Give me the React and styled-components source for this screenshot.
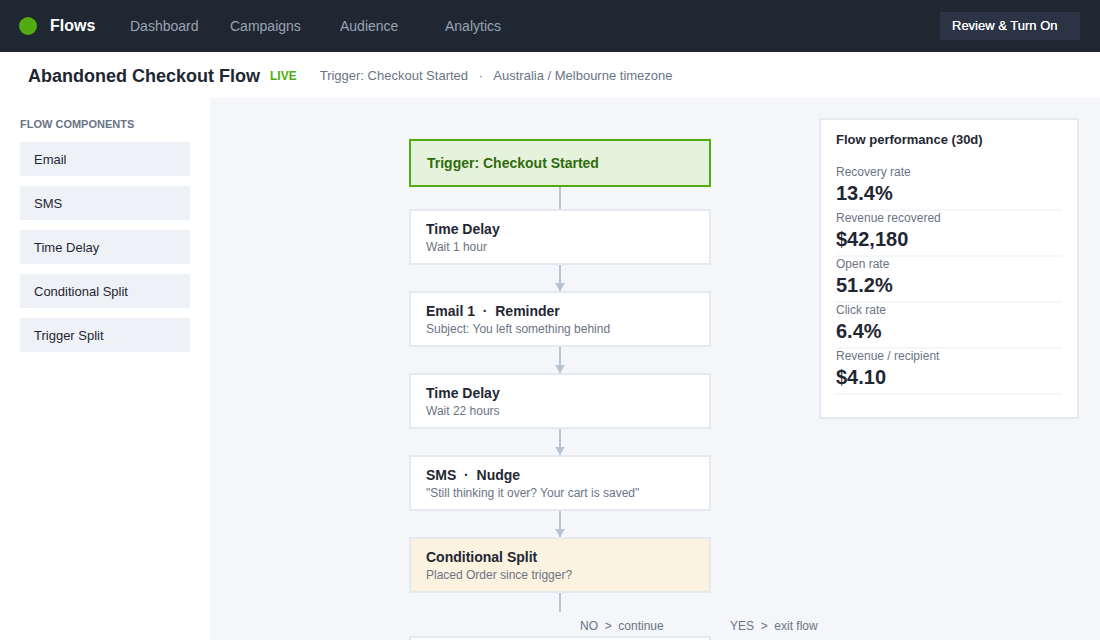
import React from 'react'
import styled, { createGlobalStyle } from 'styled-components'

const colors = {
  ink: '#1f2733',
  muted: '#6b7485',
  line: '#b8c3d3',
  border: '#e6e9f0',
  canvas: '#f4f6fa',
  green: '#52ab10',
}

const GlobalStyle = createGlobalStyle`
  html, body {
    margin: 0;
    height: 100%;
    overflow: hidden;
    background: #fff;
    font-family: "Liberation Sans", Arial, sans-serif;
    color: ${colors.ink};
  }
  * { box-sizing: border-box; }
`

const Page = styled.div`
  width: 1100px;
  height: 640px;
  display: flex;
  flex-direction: column;
  overflow: hidden;
`

const TopBar = styled.header`
  height: 52px;
  flex: none;
  display: flex;
  align-items: center;
  padding: 0 20px 0 19px;
  background: ${colors.ink};
`

const Logo = styled.span`
  width: 18px;
  height: 18px;
  border-radius: 50%;
  background: ${colors.green};
  margin-right: 13px;
`

const Brand = styled.span`
  width: 80px;
  font-size: 16px;
  font-weight: 700;
  color: #fff;
`

const Nav = styled.nav`
  display: flex;
  flex: 1;
`

const NavLink = styled.a`
  width: ${props => props.$width}px;
  font-size: 14px;
  color: #9aa3b2;
`

const TurnOn = styled.button`
  width: 140px;
  height: 28px;
  padding: 0 12px 2px;
  border: 0;
  text-align: left;
  background: #2b3444;
  color: #fff;
  font-family: "Liberation Sans", Arial, sans-serif;
  font-size: 13px;
  font-weight: 400;
  text-shadow: 0 0 0.4px #fff;
`

const SubBar = styled.div`
  height: 46px;
  flex: none;
  display: flex;
  align-items: center;
  padding: 2px 0 0 28px;
  background: #fff;
`

const Title = styled.h1`
  margin: 0 10px 0 0;
  font-size: 18px;
  font-weight: 700;
`

const Live = styled.span`
  margin-right: 23px;
  font-size: 12px;
  font-weight: 700;
  color: ${colors.green};
`

const Meta = styled.span`
  padding-bottom: 2px;
  font-size: 13px;
  color: ${colors.muted};
  white-space: pre;
`

const Body = styled.div`
  flex: 1;
  min-height: 0;
  display: flex;
`

const Sidebar = styled.aside`
  width: 210px;
  flex: none;
  padding: 20px;
  background: #fff;
`

const SidebarTitle = styled.div`
  margin-bottom: 11px;
  font-size: 11px;
  line-height: 13px;
  font-weight: 700;
  color: ${colors.muted};
`

const Palette = styled.div`
  display: flex;
  flex-direction: column;
  gap: 10px;
`

const PaletteItem = styled.div`
  height: 34px;
  padding-left: 14px;
  display: flex;
  align-items: center;
  font-size: 13px;
  background: #eef1f6;
`

const Canvas = styled.main`
  flex: 1;
  min-width: 0;
  display: flex;
  align-items: flex-start;
  padding: 20px 21px 0 199px;
  background: ${colors.canvas};
`

const Flow = styled.div`
  width: 302px;
  flex: none;
  padding-top: 21px;
  display: flex;
  flex-direction: column;
  align-items: center;
`

const TriggerNode = styled.div`
  width: 100%;
  height: 48px;
  padding-left: 16px;
  display: flex;
  align-items: center;
  border: 2px solid ${colors.green};
  background: #e6f3dc;
  font-size: 14px;
  font-weight: 700;
  color: #2f6b0c;
`

const Node = styled.div`
  width: 100%;
  height: 56px;
  padding: 10px 15px 0;
  display: flex;
  flex-direction: column;
  gap: 3px;
  border: 2px solid ${colors.border};
  background: ${props => (props.$tone === 'split' ? '#fbf2e0' : '#fff')};
`

const NodeTitle = styled.div`
  font-size: 14px;
  line-height: 16px;
  font-weight: 700;
  white-space: pre;
`

const NodeSub = styled.div`
  font-size: 12px;
  line-height: 14px;
  color: ${colors.muted};
`

const Connector = styled.div`
  position: relative;
  width: 2px;
  height: ${props => props.$height}px;
  background: ${colors.line};
`

const ArrowHead = styled.span`
  position: absolute;
  left: -4px;
  bottom: 0;
  border-left: 5px solid transparent;
  border-right: 5px solid transparent;
  border-top: 8px solid ${colors.line};
`

const Branches = styled.div`
  align-self: stretch;
  height: 24px;
  padding: 4px 0 0 171px;
  display: flex;
  font-size: 12px;
  line-height: 20px;
  color: ${colors.muted};
  white-space: pre;
`

const Branch = styled.span`
  width: 150px;
  flex: none;
`

const Panel = styled.section`
  width: 260px;
  height: 301px;
  flex: none;
  margin-left: auto;
  padding: 12px 15px;
  border: 2px solid ${colors.border};
  background: #fff;
`

const PanelTitle = styled.h2`
  margin: 0 0 17px;
  font-size: 13px;
  line-height: 16px;
  font-weight: 700;
`

const Stat = styled.div`
  height: 46px;
  border-bottom: 2px solid ${colors.canvas};
`

const StatLabel = styled.div`
  font-size: 12px;
  line-height: 15px;
  color: ${colors.muted};
`

const StatValue = styled.div`
  font-size: 20px;
  line-height: 26px;
  font-weight: 700;
`

const nav = [
  ['Dashboard', 100],
  ['Campaigns', 110],
  ['Audience', 105],
  ['Analytics', 80],
]

const palette = ['Email', 'SMS', 'Time Delay', 'Conditional Split', 'Trigger Split']

const stats = [
  ['Recovery rate', '13.4%'],
  ['Revenue recovered', '$42,180'],
  ['Open rate', '51.2%'],
  ['Click rate', '6.4%'],
  ['Revenue / recipient', '$4.10'],
]

const steps = [
  ['Time Delay', 'Wait 1 hour'],
  ['Email 1  ·  Reminder', 'Subject: You left something behind'],
  ['Time Delay', 'Wait 22 hours'],
  ['SMS  ·  Nudge', '"Still thinking it over? Your cart is saved"'],
  ['Conditional Split', 'Placed Order since trigger?', 'split'],
]

export default function App() {
  return (
    <Page>
      <GlobalStyle />
      <TopBar>
        <Logo />
        <Brand>Flows</Brand>
        <Nav>
          {nav.map(([label, width]) => (
            <NavLink key={label} $width={width}>
              {label}
            </NavLink>
          ))}
        </Nav>
        <TurnOn>Review &amp; Turn On</TurnOn>
      </TopBar>
      <SubBar>
        <Title>Abandoned Checkout Flow</Title>
        <Live>LIVE</Live>
        <Meta>Trigger: Checkout Started   ·   Australia / Melbourne timezone</Meta>
      </SubBar>
      <Body>
        <Sidebar>
          <SidebarTitle>FLOW COMPONENTS</SidebarTitle>
          <Palette>
            {palette.map(item => (
              <PaletteItem key={item}>{item}</PaletteItem>
            ))}
          </Palette>
        </Sidebar>
        <Canvas>
          <Flow>
            <TriggerNode>Trigger: Checkout Started</TriggerNode>
            <Connector $height={22} />
            {steps.map(([title, sub, tone], i) => (
              <React.Fragment key={title + i}>
                <Node $tone={tone}>
                  <NodeTitle>{title}</NodeTitle>
                  <NodeSub>{sub}</NodeSub>
                </Node>
                {i < steps.length - 1 && (
                  <Connector $height={26}>
                    <ArrowHead />
                  </Connector>
                )}
              </React.Fragment>
            ))}
            <Connector $height={19} />
            <Branches>
              <Branch>NO  &gt;  continue</Branch>
              <Branch>YES  &gt;  exit flow</Branch>
            </Branches>
            <Node />
          </Flow>
          <Panel>
            <PanelTitle>Flow performance (30d)</PanelTitle>
            {stats.map(([label, value]) => (
              <Stat key={label}>
                <StatLabel>{label}</StatLabel>
                <StatValue>{value}</StatValue>
              </Stat>
            ))}
          </Panel>
        </Canvas>
      </Body>
    </Page>
  )
}
